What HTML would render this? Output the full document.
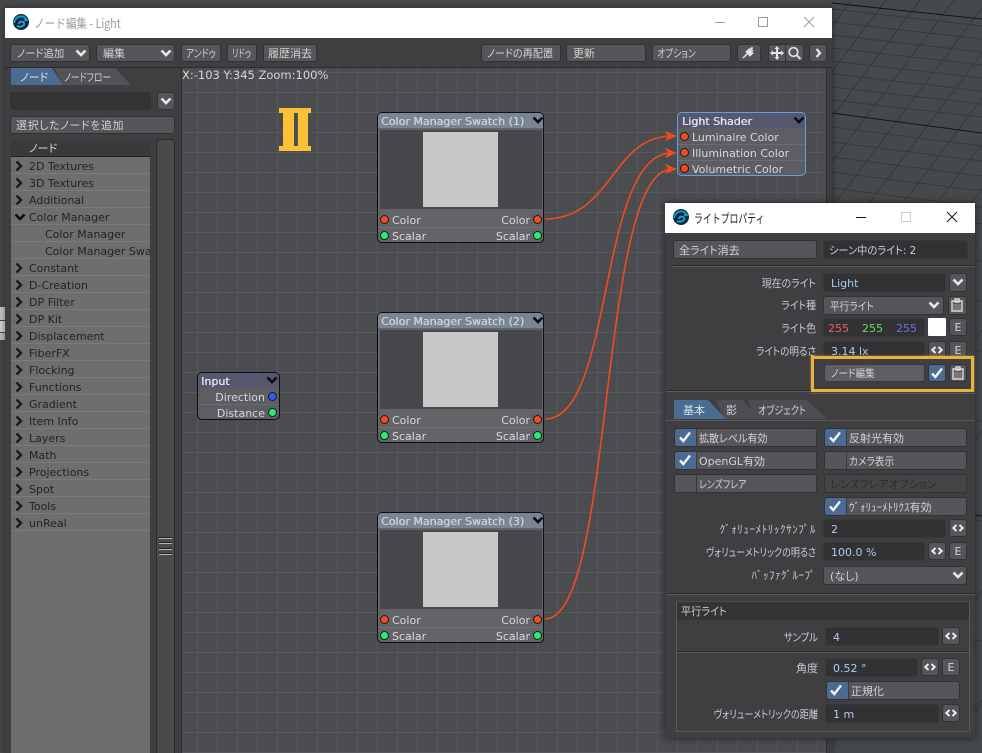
<!DOCTYPE html>
<html lang="ja"><head><meta charset="utf-8"><title>ノード編集 - Light</title>
<style>
html,body{margin:0;padding:0;width:982px;height:753px;overflow:hidden;background:#46494b}
body{position:relative;font:11px/17px "DejaVu Sans","Noto Sans CJK JP",sans-serif;color:#cfcfcf;font-feature-settings:"palt"}
div,svg{position:absolute;box-sizing:border-box}
div{white-space:nowrap}
.z{display:inline-block;transform-origin:left center}
.b{background:#565559;border:1px solid #323234;border-radius:3px;padding-left:6px;color:#d2d2d2;line-height:18px}
.f{background:#323235;border-radius:3px;padding-left:7px;color:#aecbee;line-height:20px;border:1px solid #38383a}
.l{left:665px;width:151px;text-align:right;color:#c4ccd4;line-height:20px;transform-origin:right center}
.r{left:0;width:139px;height:17px;padding-left:18px;color:#232326;border-bottom:1px solid #7a7a7a;line-height:19px}
.s{height:2px;background:#2c2c2c;border-bottom:1px solid #5a5a5a}
.p{width:9px;height:9px;border-radius:50%;border:1px solid #1b1b1b}
.ch{left:0;top:0;width:22px;height:100%;background:#4b6b92;border-right:1px solid #3b3b3d;border-radius:3px 0 0 3px}
.c{padding-left:24px}
.h{left:0;top:0;height:15px;width:100%;line-height:18px;padding-left:3px;color:#c9d1da;overflow:hidden;text-shadow:.4px 0 currentColor}
.t{color:#d8d8d8;line-height:18px}
.w{stroke:#f24b1d;stroke-width:1.6;fill:none}
.sw{left:377px;width:167px;height:131px;background:#636467;border:1px solid #0e0e0e;border-radius:5px;z-index:3}
</style></head><body>
<svg width="0" height="0" style="left:0;top:0">
<symbol id="cd" viewBox="0 0 12 8"><path d="M1.5 1.5 6 6 10.500 1.500" fill="none" stroke="#e8e8e8" stroke-width="2.600"/></symbol>
<symbol id="ck" viewBox="0 0 12 8"><path d="M1.5 1.5 6 6 10.500 1.500" fill="none" stroke="#0c0c0c" stroke-width="2.600"/></symbol>
<symbol id="cr" viewBox="0 0 8 12"><path d="M1.500 1.500 6 6 1.500 10.500" fill="none" stroke="#1b1b1b" stroke-width="2.400"/></symbol>
<symbol id="tk" viewBox="0 0 14 12"><path d="M2 6.500 5.300 10 12 1.500" fill="none" stroke="#f2f2f2" stroke-width="2.400"/></symbol>
<symbol id="lr" viewBox="0 0 12 8"><path d="M4.500 1 1.300 4 4.500 7M7.500 1 10.700 4 7.500 7" fill="none" stroke="#ececec" stroke-width="1.900"/></symbol>
<symbol id="cb" viewBox="0 0 12 14"><path d="M1 3h10v10H1zM4 1h4v3H4z" fill="none" stroke="#dcdcdc" stroke-width="1.400"/><path d="M2 6h8v6H2z" fill="#77767a"/></symbol>
<symbol id="lg" viewBox="0 0 16 16"><circle cx="8" cy="8" r="8" fill="#0c2a3c"/><path d="M1 9c1-5 5-8 10-6l3 3-3 .5" fill="none" stroke="#1793cf" stroke-width="2"/><path d="M4 12c5 2 8-1 7-3S6 7 6 10" fill="none" stroke="#1fa6e0" stroke-width="1.800"/></symbol>
</svg>

<!-- 3D viewport background -->
<svg width="982" height="753" style="left:0;top:0" fill="none">
<path stroke="#37383a" stroke-width="1" d="M852 0L694 210M886 0L728 210M920 0L762 210M954 0L796 210M988 0L830 210M1022 0L864 210M1056 0L898 210M1090 0L932 210M1124 0L966 210M1158 0L1000 210
M832 9L982 26M832 22L982 39M832 35L982 52M832 48L982 65M832 61L982 78M832 74L982 91M832 87L982 104M832 100L982 117M832 127L982 146M832 142L982 161M832 157L982 176M832 172L982 191M832 188L982 207M832 205L982 224M975 260L982 261M975 300L982 301M975 350L982 351M975 420L982 421M975 520L982 521M975 640L982 641M978 240L974 250M982 330L975 340M982 430L975 440M982 590L975 600M982 700L975 712"/>
<path stroke="#141516" stroke-width="1" d="M832 3L982 19M832 113L982 133M975 515L982 516"/>
</svg>
<div style="left:0;top:307px;width:5px;height:13px;background:#c6c6c6"></div>
<div style="left:0;top:321px;width:5px;height:11px;background:#d2d2d2"></div>
<div style="left:0;top:333px;width:5px;height:7px;background:#bdbdbd"></div>

<!-- Node window -->
<div style="left:5px;top:8px;width:827px;height:745px;background:#3f3f41;box-shadow:0 0 7px rgba(0,0,0,.45)"></div>
<div style="left:5px;top:8px;width:827px;height:30px;background:#fff"></div>
<svg style="left:13px;top:14px" width="16" height="16"><use href="#lg"/></svg>
<div style="left:34px;top:14px;font:12.500px/18px 'Noto Sans CJK JP',sans-serif;color:#9b9b9b;transform:scaleX(.85);transform-origin:left center">ノード編集 - Light</div>
<svg style="left:715px;top:14px" width="110" height="18" fill="none" stroke="#9a9a9a"><path d="M0 8.500H10"/><rect x="43.500" y="3.500" width="9" height="9"/><path d="M89 3 99 13M99 3 89 13"/></svg>

<!-- toolbar -->
<div class="b" style="left:10px;top:44px;width:80px;height:18px"><span class="z" style="transform:scaleX(.94)">ノード追加</span></div><svg style="left:75px;top:49px" width="12" height="8"><use href="#cd"/></svg>
<div class="b" style="left:96px;top:44px;width:79px;height:18px">編集</div><svg style="left:160px;top:49px" width="12" height="8"><use href="#cd"/></svg>
<div class="b" style="left:181px;top:44px;width:40px;height:18px;padding-left:4px"><span class="z" style="transform:scaleX(.8)">アンドゥ</span></div>
<div class="b" style="left:227px;top:44px;width:30px;height:18px;padding-left:4px"><span class="z" style="transform:scaleX(.72)">リドゥ</span></div>
<div class="b" style="left:263px;top:44px;width:54px;height:18px;padding-left:4px">履歴消去</div>
<div class="b" style="left:481px;top:44px;width:80px;height:18px;padding-left:5px"><span class="z" style="transform:scaleX(.92)">ノードの再配置</span></div>
<div class="b" style="left:566px;top:44px;width:80px;height:18px">更新</div>
<div class="b" style="left:652px;top:44px;width:79px;height:18px;padding-left:4px"><span class="z" style="transform:scaleX(.8)">オプション</span></div>
<div class="b" style="left:737px;top:44px;width:24px;height:18px"></div>
<svg style="left:741px;top:46px" width="15" height="14" fill="none" stroke="#e4e4e4"><path d="M2 12 6 8" stroke-width="1.500"/><path d="M5 6l3-3 4 4-3 3z" fill="#e4e4e4"/><path d="M9 2l3 3M11 1v2" stroke-width="1.400"/></svg>
<div class="b" style="left:768px;top:44px;width:18px;height:18px;border-radius:3px 0 0 3px"></div>
<div class="b" style="left:785px;top:44px;width:19px;height:18px;border-radius:0 3px 3px 0"></div>
<svg style="left:770px;top:46px" width="14" height="14" fill="#e4e4e4"><path d="M7 0l2.500 3h-5zM7 14l2.500-3h-5zM0 7l3-2.500v5zM14 7l-3-2.500v5z"/><rect x="3" y="6" width="8" height="2"/><rect x="6" y="3" width="2" height="8"/></svg>
<svg style="left:787px;top:46px" width="15" height="14" fill="none" stroke="#e4e4e4" stroke-width="1.700"><circle cx="6.500" cy="6" r="4.300"/><path d="M9.800 9.300 13.500 13" stroke-width="2"/></svg>
<div class="b" style="left:809px;top:44px;width:18px;height:18px"></div>
<svg style="left:815px;top:48px" width="7" height="10"><path d="M1.500 1 5 5 1.500 9" fill="none" stroke="#e8e8e8" stroke-width="2.200"/></svg>
<div style="left:5px;top:67px;width:827px;height:1px;background:#2c2c2c"></div>

<!-- left tabs -->
<div style="left:54px;top:68px;width:77px;height:17px;background:#535357;clip-path:polygon(0 0,61px 0,77px 100%,9px 100%)"></div>
<div style="left:64px;top:70px;line-height:16px;color:#d0d0d0;transform:scaleX(.8);transform-origin:left center">ノードフロー</div>
<div style="left:11px;top:68px;width:52px;height:17px;background:#4a6b92;clip-path:polygon(0 0,41px 0,52px 100%,0 100%);padding-left:9px;line-height:19px;color:#dde4ec">ノード</div>

<div style="left:10px;top:92px;width:141px;height:18px;background:#333335;border-radius:3px"></div>
<div class="b" style="left:157px;top:92px;width:18px;height:18px"></div><svg style="left:160px;top:97px" width="12" height="8"><use href="#cd"/></svg>
<div class="b" style="left:10px;top:116px;width:165px;height:18px;padding-left:5px;letter-spacing:.6px">選択したノードを追加</div>

<!-- list -->
<div style="left:11px;top:140px;width:140px;height:17px;background:#3a3a3c;border-bottom:1px solid #232323;border-radius:3px 3px 0 0;padding-left:18px;line-height:18px;color:#d4d4d4">ノード</div>
<div style="left:11px;top:157px;width:139px;height:596px;background:#6e6e70;overflow:hidden;border-left:0">
<div class="r" style="top:0">2D Textures</div>
<div class="r" style="top:17px">3D Textures</div>
<div class="r" style="top:34px">Additional</div>
<div class="r" style="top:51px">Color Manager</div>
<div class="r" style="top:68px;padding-left:34px">Color Manager</div>
<div class="r" style="top:85px;padding-left:34px;overflow:hidden">Color Manager Swatch</div>
<div class="r" style="top:102px">Constant</div>
<div class="r" style="top:119px">D-Creation</div>
<div class="r" style="top:136px">DP Filter</div>
<div class="r" style="top:153px">DP Kit</div>
<div class="r" style="top:170px">Displacement</div>
<div class="r" style="top:187px">FiberFX</div>
<div class="r" style="top:204px">Flocking</div>
<div class="r" style="top:221px">Functions</div>
<div class="r" style="top:238px">Gradient</div>
<div class="r" style="top:255px">Item Info</div>
<div class="r" style="top:272px">Layers</div>
<div class="r" style="top:289px">Math</div>
<div class="r" style="top:306px">Projections</div>
<div class="r" style="top:323px">Spot</div>
<div class="r" style="top:340px">Tools</div>
<div class="r" style="top:357px">unReal</div>
<svg style="left:4px;top:3px" width="8" height="12"><use href="#cr"/></svg>
<svg style="left:4px;top:20px" width="8" height="12"><use href="#cr"/></svg>
<svg style="left:4px;top:37px" width="8" height="12"><use href="#cr"/></svg>
<svg style="left:3px;top:56px" width="12" height="8"><use href="#ck"/></svg>
<svg style="left:4px;top:105px" width="8" height="12"><use href="#cr"/></svg>
<svg style="left:4px;top:122px" width="8" height="12"><use href="#cr"/></svg>
<svg style="left:4px;top:139px" width="8" height="12"><use href="#cr"/></svg>
<svg style="left:4px;top:156px" width="8" height="12"><use href="#cr"/></svg>
<svg style="left:4px;top:173px" width="8" height="12"><use href="#cr"/></svg>
<svg style="left:4px;top:190px" width="8" height="12"><use href="#cr"/></svg>
<svg style="left:4px;top:207px" width="8" height="12"><use href="#cr"/></svg>
<svg style="left:4px;top:224px" width="8" height="12"><use href="#cr"/></svg>
<svg style="left:4px;top:241px" width="8" height="12"><use href="#cr"/></svg>
<svg style="left:4px;top:258px" width="8" height="12"><use href="#cr"/></svg>
<svg style="left:4px;top:275px" width="8" height="12"><use href="#cr"/></svg>
<svg style="left:4px;top:292px" width="8" height="12"><use href="#cr"/></svg>
<svg style="left:4px;top:309px" width="8" height="12"><use href="#cr"/></svg>
<svg style="left:4px;top:326px" width="8" height="12"><use href="#cr"/></svg>
<svg style="left:4px;top:343px" width="8" height="12"><use href="#cr"/></svg>
<svg style="left:4px;top:360px" width="8" height="12"><use href="#cr"/></svg>
</div>
<!-- scroll bar -->
<div style="left:156px;top:139px;width:19px;height:614px;background:#4a494c;border:1px solid #2b2b2b;border-bottom:0;border-radius:4px 4px 0 0"></div>
<svg style="left:159px;top:537px" width="14" height="20"><path d="M0 1.500H13M0 6.500H13M0 12.500H13M0 17.500H13" stroke="#b5b5b5" stroke-width="1"/><path d="M0 .5H13M0 5.500H13M0 11.500H13M0 16.500H13" stroke="#222" stroke-width="1"/></svg>

<!-- canvas -->
<div style="left:181px;top:68px;width:646px;height:685px;background-color:#4b4c50;background-image:linear-gradient(to right,#57585c 1px,transparent 1px),linear-gradient(to bottom,#57585c 1px,transparent 1px);background-size:20px 20px;background-position:15px 4px;border-left:1px solid #2e2e2e;border-right:1px solid #2e2e2e"></div>
<div style="left:182px;top:68px;line-height:15px;color:#d6d6d6;font-size:11.500px">X:-103 Y:345 Zoom:100%</div>
<!-- II mark -->
<div style="left:279px;top:108px;width:32px;height:5px;background:#fcc136"></div>
<div style="left:279px;top:146px;width:32px;height:5px;background:#fcc136"></div>
<div style="left:283px;top:108px;width:11px;height:43px;background:#fcc136"></div>
<div style="left:298px;top:108px;width:10px;height:43px;background:#fcc136"></div>

<!-- wires -->
<svg width="982" height="753" style="left:0;top:0;z-index:2">
<path class="w" d="M545 219C612 219 612 136 672 136"/>
<path class="w" d="M545 419C615 419 597 153 672 153"/>
<path class="w" d="M545 619C615 619 598 169 672 169"/>
<path fill="#f24b1d" d="M665 131 677 136 665 141 668 136zM665 148 677 153 665 158 668 153zM665 164 677 169 665 174 668 169z"/>
</svg>

<!-- swatch nodes -->
<div class="sw" style="top:112px">
<div class="h" style="background:#7a8594;border-radius:4px 4px 0 0">Color Manager Swatch (1)</div>
<svg style="left:154px;top:3px" width="12" height="8"><use href="#ck"/></svg>
<div style="left:2px;top:17px;width:162px;height:79px;background:#47484b"></div>
<div style="left:45px;top:19px;width:75px;height:75px;background:#c8c8c8"></div>
<div style="left:0;top:114px;width:100%;height:1px;background:#6e6f72"></div>
<div class="p" style="left:2px;top:102px;background:#f5491d"></div>
<div class="p" style="left:2px;top:118px;background:#25ef70"></div>
<div class="p" style="left:155px;top:102px;background:#f5491d"></div>
<div class="p" style="left:155px;top:118px;background:#25ef70"></div>
<div class="t" style="left:14px;top:99px">Color</div><div class="t" style="left:14px;top:115px">Scalar</div>
<div class="t" style="right:13px;top:99px">Color</div><div class="t" style="right:13px;top:115px">Scalar</div>
</div>
<div class="sw" style="top:312px">
<div class="h" style="background:#7a8594;border-radius:4px 4px 0 0">Color Manager Swatch (2)</div>
<svg style="left:154px;top:3px" width="12" height="8"><use href="#ck"/></svg>
<div style="left:2px;top:17px;width:162px;height:79px;background:#47484b"></div>
<div style="left:45px;top:19px;width:75px;height:75px;background:#c8c8c8"></div>
<div style="left:0;top:114px;width:100%;height:1px;background:#6e6f72"></div>
<div class="p" style="left:2px;top:102px;background:#f5491d"></div>
<div class="p" style="left:2px;top:118px;background:#25ef70"></div>
<div class="p" style="left:155px;top:102px;background:#f5491d"></div>
<div class="p" style="left:155px;top:118px;background:#25ef70"></div>
<div class="t" style="left:14px;top:99px">Color</div><div class="t" style="left:14px;top:115px">Scalar</div>
<div class="t" style="right:13px;top:99px">Color</div><div class="t" style="right:13px;top:115px">Scalar</div>
</div>
<div class="sw" style="top:512px">
<div class="h" style="background:#7a8594;border-radius:4px 4px 0 0">Color Manager Swatch (3)</div>
<svg style="left:154px;top:3px" width="12" height="8"><use href="#ck"/></svg>
<div style="left:2px;top:17px;width:162px;height:79px;background:#47484b"></div>
<div style="left:45px;top:19px;width:75px;height:75px;background:#c8c8c8"></div>
<div style="left:0;top:114px;width:100%;height:1px;background:#6e6f72"></div>
<div class="p" style="left:2px;top:102px;background:#f5491d"></div>
<div class="p" style="left:2px;top:118px;background:#25ef70"></div>
<div class="p" style="left:155px;top:102px;background:#f5491d"></div>
<div class="p" style="left:155px;top:118px;background:#25ef70"></div>
<div class="t" style="left:14px;top:99px">Color</div><div class="t" style="left:14px;top:115px">Scalar</div>
<div class="t" style="right:13px;top:99px">Color</div><div class="t" style="right:13px;top:115px">Scalar</div>
</div>

<!-- Input node -->
<div style="left:197px;top:372px;width:83px;height:48px;background:#5d5e61;border:1px solid #0e0e0e;border-radius:5px;z-index:3">
<div class="h" style="background:#56576f;border-radius:4px 4px 0 0;padding-left:3px;color:#dfe0ea">Input</div>
<svg style="left:68px;top:3px" width="12" height="8"><use href="#ck"/></svg>
<div style="left:0;top:31px;width:100%;height:1px;background:#6a6b6e"></div>
<div class="t" style="right:14px;top:16px">Direction</div><div class="t" style="right:14px;top:32px">Distance</div>
<div class="p" style="left:70px;top:19px;background:#2f5cf2"></div>
<div class="p" style="left:70px;top:35px;background:#25ef70"></div>
</div>

<!-- Light Shader node -->
<div style="left:677px;top:112px;width:129px;height:64px;background:#5d5e61;border:1px solid #5da2da;border-radius:5px;z-index:3">
<div class="h" style="background:#56576f;border-radius:4px 4px 0 0;padding-left:4px;color:#dfe0ea">Light Shader</div>
<svg style="left:115px;top:3px" width="12" height="8"><use href="#ck"/></svg>
<div style="left:0;top:31px;width:100%;height:1px;background:#6a6b6e"></div>
<div style="left:0;top:47px;width:100%;height:1px;background:#6a6b6e"></div>
<div class="p" style="left:2px;top:19px;background:#f5491d"></div>
<div class="p" style="left:2px;top:35px;background:#f5491d"></div>
<div class="p" style="left:2px;top:51px;background:#f5491d"></div>
<div class="t" style="left:14px;top:16px">Luminaire Color</div>
<div class="t" style="left:14px;top:32px">Illumination Color</div>
<div class="t" style="left:14px;top:48px">Volumetric Color</div>
</div>

<!-- Light properties window -->
<div style="left:665px;top:203px;width:310px;height:535px;background:#3f3f41;box-shadow:0 0 7px rgba(0,0,0,.55);z-index:4">
</div>
<div style="left:0;top:0;width:982px;height:753px;z-index:5">
<div style="left:665px;top:203px;width:310px;height:30px;background:#fff"></div>
<svg style="left:673px;top:209px" width="16" height="16"><use href="#lg"/></svg>
<div style="left:694px;top:209px;font:12.500px/18px 'Noto Sans CJK JP',sans-serif;color:#222;transform:scaleX(.71);transform-origin:left center">ライトプロパティ</div>
<svg style="left:855px;top:209px" width="110" height="18" fill="none"><path d="M1 8.500H11" stroke="#111"/><rect x="46.500" y="3.500" width="9" height="9" stroke="#ccc"/><path d="M92 3 102 13M102 3 92 13" stroke="#111"/></svg>

<div class="b" style="left:673px;top:240px;width:144px;height:19px;line-height:19px;padding-left:5px">全ライト消去</div>
<div class="f" style="left:823px;top:240px;width:145px;height:19px;color:#c8d0da;padding-left:5px;line-height:19px"><span class="z" style="transform:scaleX(.93)">シーン中のライト: 2</span></div>
<div class="s" style="left:671px;top:265px;width:304px"></div>

<div class="l" style="top:274px;transform:scaleX(.9)">現在のライト</div>
<div class="f" style="left:823px;top:273px;width:123px;height:19px">Light</div>
<div class="b" style="left:949px;top:273px;width:18px;height:19px"></div><svg style="left:952px;top:278px" width="12" height="8"><use href="#cd"/></svg>

<div class="l" style="top:296px;transform:scaleX(.9)">ライト種</div>
<div class="b" style="left:823px;top:296px;width:121px;height:19px;line-height:19px"><span class="z" style="transform:scaleX(.88)">平行ライト</span></div><svg style="left:928px;top:301px" width="12" height="8"><use href="#cd"/></svg>
<div class="b" style="left:948px;top:296px;width:19px;height:19px"></div><svg style="left:951px;top:298px" width="12" height="14"><use href="#cb"/></svg>

<div class="l" style="top:319px;transform:scaleX(.9)">ライト色</div>
<div class="f" style="left:823px;top:318px;width:102px;height:19px;padding:0"></div>
<div style="left:828px;top:320px;line-height:17px;color:#e85f5f">255</div>
<div style="left:862px;top:320px;line-height:17px;color:#63dd63">255</div>
<div style="left:896px;top:320px;line-height:17px;color:#6f6fe6">255</div>
<div style="left:928px;top:318px;width:18px;height:18px;background:#fff;border-radius:1px"></div>
<div class="b" style="left:949px;top:318px;width:18px;height:18px;padding:0;text-align:center">E</div>

<div class="l" style="top:342px;transform:scaleX(.87)">ライトの明るさ</div>
<div class="f" style="left:823px;top:341px;width:102px;height:19px">3.14 lx</div>
<div class="b" style="left:928px;top:341px;width:18px;height:17px"></div><svg style="left:931px;top:346px" width="12" height="8"><use href="#lr"/></svg>
<div class="b" style="left:949px;top:341px;width:18px;height:17px;padding:0;text-align:center">E</div>

<div style="left:811px;top:356px;width:163px;height:36px;border:3px solid #e8b23c;background:#3f3f41;box-shadow:0 0 2px rgba(232,178,60,.7)"></div>
<div class="b" style="left:824px;top:364px;width:101px;height:18px;background:#5f5e62;border-color:#3a3a3c"><span class="z" style="transform:scaleX(.87)">ノード編集</span></div>
<div class="b" style="left:928px;top:364px;width:18px;height:18px;background:#4b6b92;padding:0"></div><svg style="left:930px;top:367px" width="14" height="12"><use href="#tk"/></svg>
<div class="b" style="left:949px;top:364px;width:18px;height:18px;padding:0"></div><svg style="left:952px;top:366px" width="12" height="14"><use href="#cb"/></svg>
<div class="s" style="left:666px;top:390px;width:145px"></div>
<div class="s" style="left:811px;top:392px;width:164px;background:#3f3f41"></div>

<!-- props tabs -->
<div style="left:748px;top:400px;width:79px;height:19px;background:#4e4e52;clip-path:polygon(0 0,59px 0,79px 100%,7px 100%);line-height:21px;padding-left:10px;color:#d4d4d4"><span class="z" style="transform:scaleX(.83)">オブジェクト</span></div>
<div style="left:716px;top:400px;width:43px;height:19px;background:#4e4e52;clip-path:polygon(0 0,27px 0,43px 100%,8px 100%);line-height:21px;padding-left:10px;color:#d4d4d4">影</div>
<div style="left:674px;top:400px;width:52px;height:19px;background:#4a6b92;clip-path:polygon(0 0,34px 0,52px 100%,0 100%);line-height:21px;padding-left:9px;color:#dde4ec">基本</div>
<div style="left:666px;top:420px;width:309px;height:1px;background:#5a5a5a"></div>

<div class="b c" style="left:674px;top:428px;width:143px;height:19px;line-height:19px"><div class="ch"></div><span class="z" style="transform:scaleX(.91)">拡散レベル有効</span></div><svg style="left:678px;top:431px" width="14" height="12"><use href="#tk"/></svg>
<div class="b c" style="left:824px;top:428px;width:143px;height:19px;line-height:19px"><div class="ch"></div>反射光有効</div><svg style="left:828px;top:431px" width="14" height="12"><use href="#tk"/></svg>
<div class="b c" style="left:674px;top:451px;width:143px;height:19px;line-height:19px"><div class="ch"></div>OpenGL有効</div><svg style="left:678px;top:454px" width="14" height="12"><use href="#tk"/></svg>
<div class="b c" style="left:824px;top:451px;width:143px;height:19px;line-height:19px"><div class="ch" style="background:#565559"></div><span class="z" style="transform:scaleX(.88)">カメラ表示</span></div>
<div class="b c" style="left:674px;top:474px;width:143px;height:19px;line-height:19px"><div class="ch" style="background:#565559"></div><span class="z" style="transform:scaleX(.81)">レンズフレア</span></div>
<div class="b" style="left:824px;top:474px;width:143px;height:19px;line-height:19px;background:#454548;color:#2c2c2e;padding-left:5px">レンズフレアオプション</div>
<div class="b c" style="left:824px;top:497px;width:143px;height:19px;line-height:19px"><div class="ch"></div>ｳﾞｫﾘｭｰﾒﾄﾘｸｽ有効</div><svg style="left:828px;top:500px" width="14" height="12"><use href="#tk"/></svg>

<div class="l" style="top:520px;letter-spacing:.6px">ｸﾞｫﾘｭｰﾒﾄﾘｯｸｻﾝﾌﾟﾙ</div>
<div class="f" style="left:823px;top:519px;width:123px;height:19px">2</div>
<div class="b" style="left:949px;top:519px;width:18px;height:18px"></div><svg style="left:952px;top:524px" width="12" height="8"><use href="#lr"/></svg>

<div class="l" style="top:543px;transform:scaleX(.82)">ヴォリューメトリックの明るさ</div>
<div class="f" style="left:823px;top:542px;width:102px;height:19px">100.0 %</div>
<div class="b" style="left:928px;top:542px;width:18px;height:18px"></div><svg style="left:931px;top:547px" width="12" height="8"><use href="#lr"/></svg>
<div class="b" style="left:949px;top:542px;width:18px;height:18px;padding:0;text-align:center">E</div>

<div class="l" style="top:566px;letter-spacing:.5px">ﾊﾞｯﾌｧｸﾞﾙｰﾌﾟ</div>
<div class="b" style="left:823px;top:566px;width:144px;height:19px;line-height:19px">(なし)</div><svg style="left:952px;top:571px" width="12" height="8"><use href="#cd"/></svg>
<div class="s" style="left:666px;top:593px;width:309px"></div>

<!-- group box -->
<div style="left:676px;top:601px;width:294px;height:131px;border:1px solid #5a5a5c;border-top-color:#4a4a4c"></div>
<div style="left:677px;top:602px;width:292px;height:18px;background:#343436;padding-left:4px;line-height:20px;color:#cfcfcf"><span class="z" style="transform:scaleX(.92)">平行ライト</span></div>
<div class="l" style="top:628px;left:668px;width:150px;transform:scaleX(.85)">サンプル</div>
<div class="f" style="left:825px;top:627px;width:114px;height:19px">4</div>
<div class="b" style="left:942px;top:627px;width:18px;height:18px"></div><svg style="left:945px;top:632px" width="12" height="8"><use href="#lr"/></svg>
<div class="s" style="left:677px;top:651px;width:292px"></div>
<div class="l" style="top:659px;left:668px;width:150px">角度</div>
<div class="f" style="left:825px;top:658px;width:93px;height:19px">0.52 °</div>
<div class="b" style="left:921px;top:658px;width:18px;height:18px"></div><svg style="left:924px;top:663px" width="12" height="8"><use href="#lr"/></svg>
<div class="b" style="left:942px;top:658px;width:18px;height:18px;padding:0;text-align:center">E</div>
<div class="b c" style="left:826px;top:681px;width:134px;height:19px;line-height:19px"><div class="ch"></div>正規化</div><svg style="left:829px;top:684px" width="14" height="12"><use href="#tk"/></svg>
<div class="l" style="top:705px;left:668px;width:150px;transform:scaleX(.83)">ヴォリューメトリックの距離</div>
<div class="f" style="left:825px;top:704px;width:114px;height:19px">1 m</div>
<div class="b" style="left:942px;top:704px;width:18px;height:18px"></div><svg style="left:945px;top:709px" width="12" height="8"><use href="#lr"/></svg>
</div>
</body></html>
